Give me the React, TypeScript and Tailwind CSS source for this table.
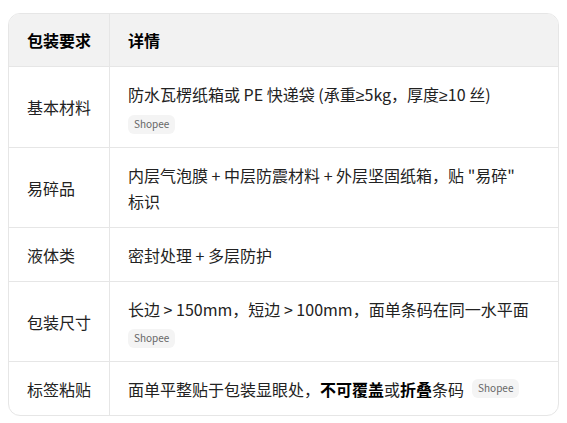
import React from "react"

// Platform tag shown after a requirement
function Tag({ inline = false }: { inline?: boolean }) {
  return (
    <span
      className={`${inline ? "ml-2 mt-[3px] align-top" : "mt-[7px]"} inline-flex h-[19px] items-center rounded-md bg-[#f4f4f4] px-[6px] text-[10px] leading-none text-[#666]`}
    >
      Shopee
    </span>
  )
}

// narrow "≥" as in the latin face
const Ge = () => <span style={{ fontFamily: '"Noto Sans", sans-serif' }}>≥</span>

const rows: { name: string; detail: React.ReactNode }[] = [
  {
    name: "基本材料",
    detail: (
      <>
        <div>
          防水瓦楞纸箱或 PE 快递袋 (承重<Ge />5kg，厚度<Ge />10 丝)
        </div>
        <Tag />
      </>
    ),
  },
  {
    name: "易碎品",
    detail: <div>内层气泡膜 + 中层防震材料 + 外层坚固纸箱，贴 "易碎" 标识</div>,
  },
  {
    name: "液体类",
    detail: <div>密封处理 + 多层防护</div>,
  },
  {
    name: "包装尺寸",
    detail: (
      <>
        <div>长边 &gt; 150mm，短边 &gt; 100mm，面单条码在同一水平面</div>
        <Tag />
      </>
    ),
  },
  {
    name: "标签粘贴",
    detail: (
      <div>
        面单平整贴于包装显眼处，<b className="font-bold text-black">不可覆盖</b>或
        <b className="font-bold text-black">折叠</b>条码
        <Tag inline />
      </div>
    ),
  },
]

export default function App() {
  return (
    <div
      className="bg-white px-2 pt-[13px] pb-2 text-[16px] leading-[26px] text-[#222]"
      style={{ fontFamily: '"Noto Sans CJK SC", "Noto Sans", sans-serif' }}
    >
      <div className="w-[551px] overflow-hidden rounded-xl border border-[#e6e6e6]">
        <div className="grid grid-cols-[100px_1fr] bg-[#f2f2f2] font-bold text-black">
          <div className="px-[18px] py-[13px]">包装要求</div>
          <div className="border-l border-[#e6e6e6] py-[13px] pr-6 pl-[18px]">详情</div>
        </div>
        {rows.map((row) => (
          <div key={row.name} className="grid grid-cols-[100px_1fr] border-t border-[#e6e6e6]">
            <div className="flex items-center px-[18px]">{row.name}</div>
            <div className="flex flex-col items-start border-l border-[#e6e6e6] py-[13.5px] pr-6 pl-[18px]">
              {row.detail}
            </div>
          </div>
        ))}
      </div>
    </div>
  )
}
